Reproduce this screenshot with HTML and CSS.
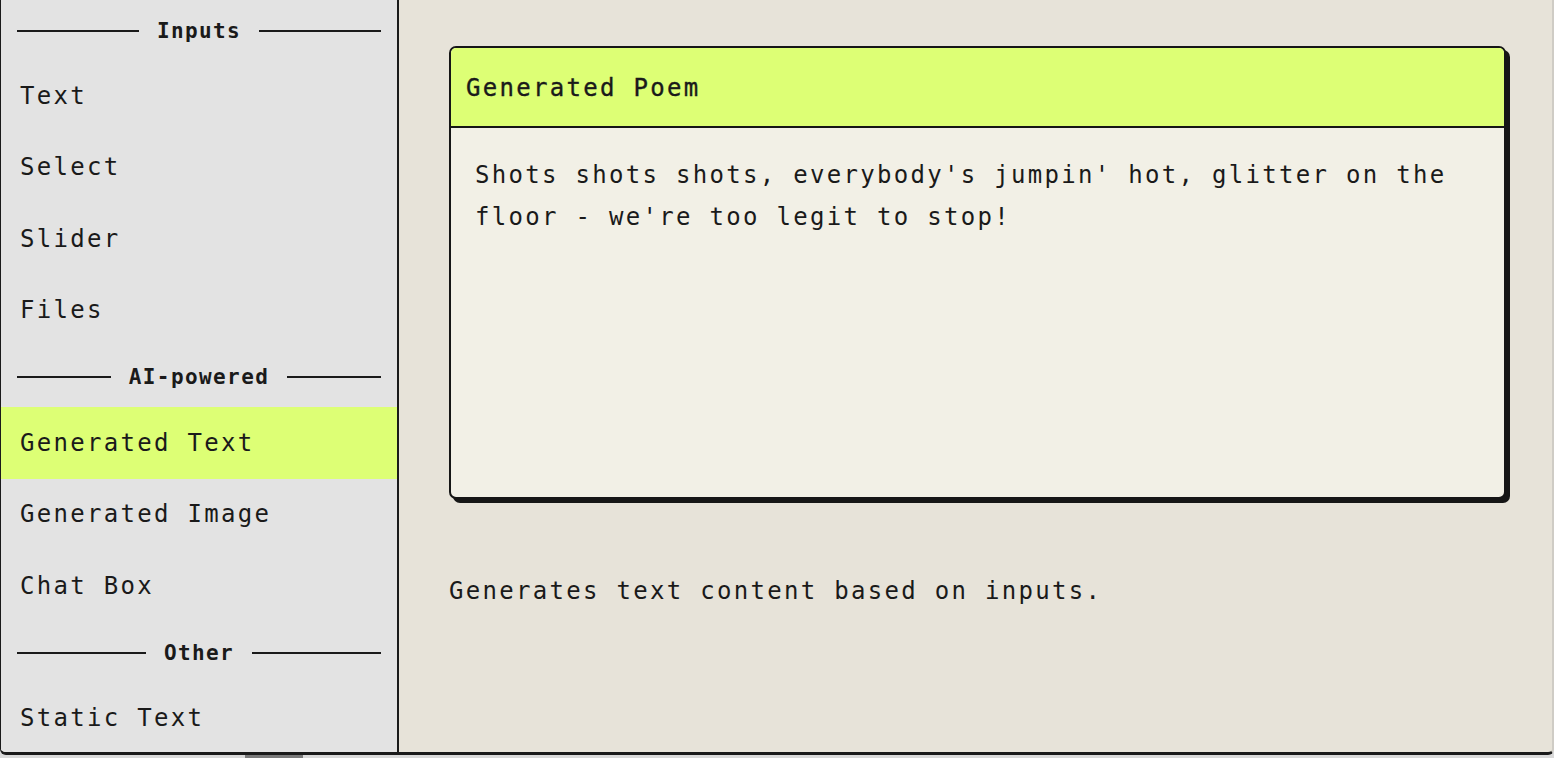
FILE: index.html
```html
<!DOCTYPE html>
<html lang="en">
<head>
<meta charset="utf-8">
<title>Components</title>
<link rel="stylesheet" href="styles.css">
</head>
<body>
<div class="window">
  <nav class="sidebar">
    <div class="group-title first"><span>Inputs</span></div>
    <div class="item">Text</div>
    <div class="item">Select</div>
    <div class="item">Slider</div>
    <div class="item">Files</div>
    <div class="group-title"><span>AI-powered</span></div>
    <div class="item active">Generated Text</div>
    <div class="item">Generated Image</div>
    <div class="item">Chat Box</div>
    <div class="group-title"><span>Other</span></div>
    <div class="item">Static Text</div>
  </nav>
  <main class="main">
    <section class="card">
      <header class="card-head">Generated Poem</header>
      <div class="card-body">Shots shots shots, everybody's jumpin' hot, glitter on the floor - we're too legit to stop!</div>
    </section>
    <p class="desc">Generates text content based on inputs.</p>
  </main>
</div>
<footer class="footer">
  <span class="fb">Submit Feedback</span><span class="fb-key">↗</span>
  <span class="fb-note">Partnership an Ammonia Reactor Blueprints</span>
</footer>
</body>
</html>
```
FILE: styles.css
```css
* { box-sizing: border-box; }
html, body { margin: 0; padding: 0; }
body {
  width: 1554px;
  height: 758px;
  overflow: hidden;
  background: #d9d9d9;
  font-family: "DejaVu Sans Mono", "Liberation Mono", monospace;
  color: #1a1a1a;
}
.window {
  display: flex;
  height: 755px;
  border-left: 1px solid #1a1a1a;
  border-right: 2px solid #cfccc5;
  border-bottom: 3px solid #1a1a1a;
  border-radius: 0 0 6px 6px;
  overflow: hidden;
  background: #e7e3d9;
}
.sidebar {
  width: 398px;
  flex: none;
  background: #e3e3e3;
  border-right: 2px solid #1a1a1a;
  display: flex;
  flex-direction: column;
}
.group-title {
  height: 61px;
  flex: none;
  display: flex;
  align-items: center;
  gap: 18px;
  padding: 1px 16px 0 16px;
  font-size: 21px;
  font-weight: bold;
  letter-spacing: 1.4px;
}
.group-title.first { height: 60px; }
.group-title::before,
.group-title::after {
  content: "";
  flex: 1;
  height: 2px;
  background: #1a1a1a;
}
.item {
  height: 71.5px;
  flex: none;
  display: flex;
  align-items: center;
  padding-left: 19px;
  font-size: 24px;
  letter-spacing: 2.3px;
}
.item.active { background: #ddff75; }
.main {
  flex: 1;
  padding: 46px 46px 0 50px;
  display: flex;
  flex-direction: column;
}
.card {
  height: 453px;
  flex: none;
  border: 2px solid #161616;
  border-radius: 7px;
  box-shadow: 4px 4px 0 #161616;
  overflow: hidden;
  background: #f2f0e6;
  display: flex;
  flex-direction: column;
}
.card-head {
  height: 80px;
  flex: none;
  background: #ddff75;
  border-bottom: 2px solid #161616;
  display: flex;
  align-items: center;
  padding: 2px 0 0 15px;
  font-size: 24px;
  letter-spacing: 2.3px;
  -webkit-text-stroke: 0.35px #1a1a1a;
}
.card-body {
  padding: 26px 24px 0 24px;
  font-size: 24px;
  letter-spacing: 2.3px;
  line-height: 42px;
}
.desc {
  margin: 71px 0 0 0;
  font-size: 24px;
  letter-spacing: 2.3px;
  line-height: 42px;
}
.footer {
  height: 3px;
  overflow: hidden;
  font-size: 22px;
  letter-spacing: 2px;
  color: #2a2a2a;
  white-space: nowrap;
}
.fb, .fb-key, .fb-note {
  display: inline-block;
  margin-top: -2px;
  line-height: 30px;
  vertical-align: top;
}
.fb { margin-left: 12px; }
.fb-key {
  margin-left: 4px;
  width: 58px;
  background: #7a7a7a;
  color: #ddd;
  text-align: center;
}
.fb-note { margin-left: 230px; }
```
